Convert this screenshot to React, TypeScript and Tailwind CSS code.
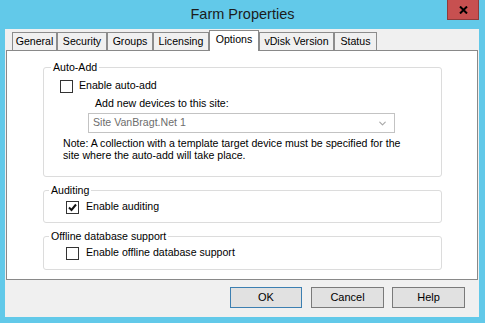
import { ChevronDown } from "lucide-react";

const tabs = [
  { label: "General", w: "w-[45px]" },
  { label: "Security", w: "w-[50px]" },
  { label: "Groups", w: "w-[46px]" },
  { label: "Licensing", w: "w-[56px]" },
  { label: "Options", w: "w-[50px]", active: true },
  { label: "vDisk Version", w: "w-[75px]" },
  { label: "Status", w: "w-[43px]" },
];

function Checkbox({ checked }: { checked?: boolean }) {
  return (
    <span className="flex size-[13px] shrink-0 items-center justify-center border border-[#333333] bg-white">
      {checked && (
        <svg width="9" height="9" viewBox="0 0 9 9">
          <path d="M1 4.5 L3.5 7 L8 1.5" fill="none" stroke="#111" strokeWidth="2" />
        </svg>
      )}
    </span>
  );
}

function Button({ label, w, primary }: { label: string; w: string; primary?: boolean }) {
  return (
    <button
      className={`${w} h-[21px] border bg-[#e1e1e1] text-[11px] text-black ${
        primary ? "border-[#3c7fb1]" : "border-[#7a7a7a]"
      }`}
    >
      {label}
    </button>
  );
}

export default function App() {
  return (
    <div className="flex h-[323px] w-[485px] flex-col bg-[#62c9e9] font-['Liberation_Sans',Arial,sans-serif] text-black">
      {/* title bar */}
      <div className="grid h-[29px] grid-cols-[1fr_auto_1fr]">
        <div />
        <div className="self-center text-[14.5px] leading-none text-[#1c1c1c]">Farm Properties</div>
        <div className="justify-self-end pr-[6px]">
          <div className="flex h-[20px] w-[32px] items-center justify-center border border-t-0 border-[#8e3b3b] bg-[#c75050]">
            <svg width="9" height="8" viewBox="0 0 9 8">
              <path d="M1 0.5 L8 7.5 M8 0.5 L1 7.5" stroke="#000" strokeWidth="2" />
            </svg>
          </div>
        </div>
      </div>

      {/* client area */}
      <div className="ml-[5px] flex h-[288px] w-[474px] flex-col bg-[#f0f0f0]">
        <div className="mt-[1px] flex h-[20px] items-end pl-[7px] text-[10.6px]">
          {tabs.map((t) =>
            t.active ? (
              <div
                key={t.label}
                className={`${t.w} relative z-10 -mb-px flex h-[21px] items-center justify-center border border-b-0 border-[#898989] bg-white pb-[2px]`}
              >
                {t.label}
              </div>
            ) : (
              <div
                key={t.label}
                className={`${t.w} flex h-[18px] items-center justify-center border border-b-0 border-[#8c8c8c] bg-[#f0f0f0]`}
              >
                {t.label}
              </div>
            )
          )}
        </div>

        <div className="ml-[1px] flex h-[230px] w-[472px] flex-col border border-[#898989] bg-white pl-[36px] pt-[9px] text-[10.6px]">
          <fieldset className="w-[399px] rounded-[3px] border border-[#dcdcdc] pb-[15px]">
            <legend className="ml-[7px] px-[2px] leading-[14px]">Auto-Add</legend>
            <div className="mt-[4px] ml-[16px] flex h-[16px] items-center gap-[6px]">
              <Checkbox />
              <span>Enable auto-add</span>
            </div>
            <div className="mt-[2px] ml-[51px] leading-[14px]">Add new devices to this site:</div>
            <div className="mt-[3px] ml-[44px] flex h-[20px] w-[307px] items-center justify-between border border-[#c3c3c3] bg-white pl-[4px] pr-[6px] text-[#6d6d6d]">
              <span>Site VanBragt.Net 1</span>
              <ChevronDown className="size-[11px] text-[#a8a8a8]" strokeWidth={2.5} />
            </div>
            <p className="mt-[4px] ml-[19px] leading-[12px]">
              Note: A collection with a template target device must be specified for the
              <br />
              site where the auto-add will take place.
            </p>
          </fieldset>

          <fieldset className="mt-[6px] w-[399px] rounded-[3px] border border-[#dcdcdc] pb-[7px]">
            <legend className="ml-[5px] px-[2px] leading-[14px]">Auditing</legend>
            <div className="mt-[2px] ml-[22px] flex h-[16px] items-center gap-[7px]">
              <Checkbox checked />
              <span>Enable auditing</span>
            </div>
          </fieldset>

          <fieldset className="mt-[6px] w-[399px] rounded-[3px] border border-[#dcdcdc] pb-[8px]">
            <legend className="ml-[5px] px-[2px] leading-[14px]">Offline database support</legend>
            <div className="mt-[2px] ml-[22px] flex h-[16px] items-center gap-[7px]">
              <Checkbox />
              <span>Enable offline database support</span>
            </div>
          </fieldset>
        </div>

        <div className="mt-[7px] flex justify-end pr-[14px]">
          <Button label="OK" w="w-[72px]" primary />
          <div className="w-[9px]" />
          <Button label="Cancel" w="w-[73px]" />
          <div className="w-[8px]" />
          <Button label="Help" w="w-[73px]" />
        </div>
      </div>
    </div>
  );
}
